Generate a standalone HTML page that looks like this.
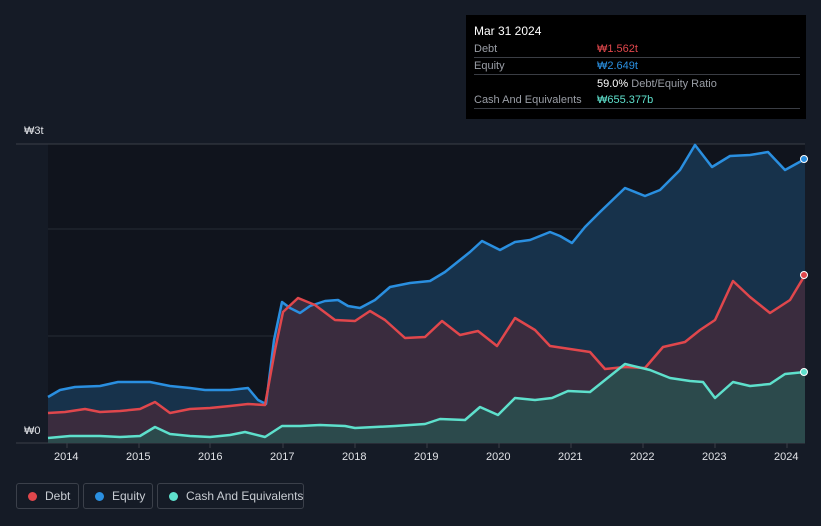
<!DOCTYPE html>
<html><head><meta charset="utf-8"><style>
body{margin:0;width:821px;height:526px;background:#151b26;font-family:"Liberation Sans","Noto Sans CJK KR",sans-serif;overflow:hidden;position:relative}
.tip{position:absolute;left:466px;top:15px;width:340px;height:104px;background:#000;color:#fff;font-size:11px}
.tip .r{position:absolute;left:8px;width:326px;border-bottom:1px solid #3a3d44;height:16px;line-height:16px}
.lbl{color:#9a9ea6}
.v{position:absolute;left:123px;top:0}
.leg{position:absolute;top:483px;height:26px;border:1px solid #3b404a;border-radius:3px;color:#c8ccd2;font-size:12px;line-height:24px;box-sizing:border-box;white-space:nowrap}
.leg i{position:absolute;left:11px;top:8px;width:9px;height:9px;border-radius:50%}
.ax{position:absolute;color:#e0e2e6;font-size:11px}
</style></head><body>
<svg width="821" height="526" style="position:absolute;left:0;top:0">
<rect x="48" y="144" width="757" height="299" fill="#10141d"/>
<line x1="16" y1="144" x2="805" y2="144" stroke="#3a3f48"/>
<line x1="48" y1="229" x2="805" y2="229" stroke="#262b35"/>
<line x1="48" y1="336" x2="805" y2="336" stroke="#262b35"/>
<line x1="16" y1="443" x2="805" y2="443" stroke="#3a3f48"/>
<path fill="#17324b" d="M48,397 L60,390 75,387 100,386 118,382 150,382 170,386 190,388 205,390 230,390 248,388 258,400 266,404 274,340 282,302 290,308 300,313 310,306 325,301 338,300 348,306 360,308 375,300 390,287 410,283 430,281 445,272 460,260 470,252 482,241 500,250 515,242 530,240 550,232 560,236 572,243 585,227 600,212 625,188 645,196 660,190 680,170 695,145 712,167 730,156 750,155 768,152 785,170 805,159 L805,443 48,443Z"/>
<path fill="#3a2c3e" d="M48,413 L65,412 85,409 100,412 120,411 140,409 155,402 170,413 190,409 210,408 230,406 248,404 265,405 275,350 283,312 298,298 315,305 335,320 355,321 370,311 385,320 405,338 425,337 442,321 460,335 478,331 497,346 515,318 535,330 550,346 570,349 590,352 605,369 625,367 645,368 663,347 685,342 700,330 715,320 733,281 750,297 770,313 790,300 805,275 L805,443 48,443Z"/>
<path fill="#2c4a4c" d="M48,438 L70,436 100,436 120,437 140,436 155,427 170,434 190,436 210,437 230,435 245,432 265,437 282,426 300,426 320,425 345,426 355,428 375,427 395,426 425,424 440,419 465,420 480,407 498,415 515,398 535,400 552,398 568,391 590,392 605,380 625,364 650,370 670,378 690,381 703,382 715,398 733,382 750,386 770,384 785,374 805,372 L805,443 48,443Z"/>
<g fill="none" stroke-width="2.5" stroke-linejoin="round">
<polyline stroke="#2a8fe0" points="48,397 60,390 75,387 100,386 118,382 150,382 170,386 190,388 205,390 230,390 248,388 258,400 266,404 274,340 282,302 290,308 300,313 310,306 325,301 338,300 348,306 360,308 375,300 390,287 410,283 430,281 445,272 460,260 470,252 482,241 500,250 515,242 530,240 550,232 560,236 572,243 585,227 600,212 625,188 645,196 660,190 680,170 695,145 712,167 730,156 750,155 768,152 785,170 805,159"/>
<polyline stroke="#e0474c" points="48,413 65,412 85,409 100,412 120,411 140,409 155,402 170,413 190,409 210,408 230,406 248,404 265,405 275,350 283,312 298,298 315,305 335,320 355,321 370,311 385,320 405,338 425,337 442,321 460,335 478,331 497,346 515,318 535,330 550,346 570,349 590,352 605,369 625,367 645,368 663,347 685,342 700,330 715,320 733,281 750,297 770,313 790,300 805,275"/>
<polyline stroke="#5ee0cc" points="48,438 70,436 100,436 120,437 140,436 155,427 170,434 190,436 210,437 230,435 245,432 265,437 282,426 300,426 320,425 345,426 355,428 375,427 395,426 425,424 440,419 465,420 480,407 498,415 515,398 535,400 552,398 568,391 590,392 605,380 625,364 650,370 670,378 690,381 703,382 715,398 733,382 750,386 770,384 785,374 805,372"/>
</g>
<circle cx="804" cy="159" r="3.5" fill="#2a8fe0" stroke="#fff" stroke-width="1"/>
<circle cx="804" cy="275" r="3.5" fill="#e0474c" stroke="#fff" stroke-width="1"/>
<circle cx="804" cy="372" r="3.5" fill="#5ee0cc" stroke="#fff" stroke-width="1"/>
<g stroke="#3a3f48"><line x1="67" y1="443" x2="67" y2="448"/><line x1="139" y1="443" x2="139" y2="448"/><line x1="210" y1="443" x2="210" y2="448"/><line x1="283" y1="443" x2="283" y2="448"/><line x1="355" y1="443" x2="355" y2="448"/><line x1="427" y1="443" x2="427" y2="448"/><line x1="499" y1="443" x2="499" y2="448"/><line x1="571" y1="443" x2="571" y2="448"/><line x1="643" y1="443" x2="643" y2="448"/><line x1="715" y1="443" x2="715" y2="448"/><line x1="787" y1="443" x2="787" y2="448"/></g>
</svg>
<div class="ax" style="left:24px;top:125px">₩3t</div>
<div class="ax" style="left:24px;top:425px">₩0</div>
<div class="ax" style="left:54px;top:451px">2014</div>
<div class="ax" style="left:126px;top:451px">2015</div>
<div class="ax" style="left:198px;top:451px">2016</div>
<div class="ax" style="left:270px;top:451px">2017</div>
<div class="ax" style="left:342px;top:451px">2018</div>
<div class="ax" style="left:414px;top:451px">2019</div>
<div class="ax" style="left:486px;top:451px">2020</div>
<div class="ax" style="left:558px;top:451px">2021</div>
<div class="ax" style="left:630px;top:451px">2022</div>
<div class="ax" style="left:702px;top:451px">2023</div>
<div class="ax" style="left:774px;top:451px">2024</div>
<div class="tip">
<div style="position:absolute;left:8px;top:9px;font-size:12px">Mar 31 2024</div>
<div class="r" style="top:26px"><span class="lbl">Debt</span><span class="v" style="color:#e0474c">₩1.562t</span></div>
<div class="r" style="top:43px"><span class="lbl">Equity</span><span class="v" style="color:#2a8fe0">₩2.649t</span></div>
<div style="position:absolute;left:131px;top:61px;line-height:16px"><b style="font-weight:normal;color:#fff">59.0%</b> <span class="lbl">Debt/Equity Ratio</span></div>
<div class="r" style="top:77px"><span class="lbl">Cash And Equivalents</span><span class="v" style="color:#5ee0cc">₩655.377b</span></div>
</div>
<div class="leg" style="left:16px;width:63px"><i style="background:#e0474c"></i><span style="position:absolute;left:28px">Debt</span></div>
<div class="leg" style="left:83px;width:70px"><i style="background:#2a8fe0"></i><span style="position:absolute;left:28px">Equity</span></div>
<div class="leg" style="left:157px;width:147px"><i style="background:#5ee0cc"></i><span style="position:absolute;left:28px">Cash And Equivalents</span></div>
</body></html>
